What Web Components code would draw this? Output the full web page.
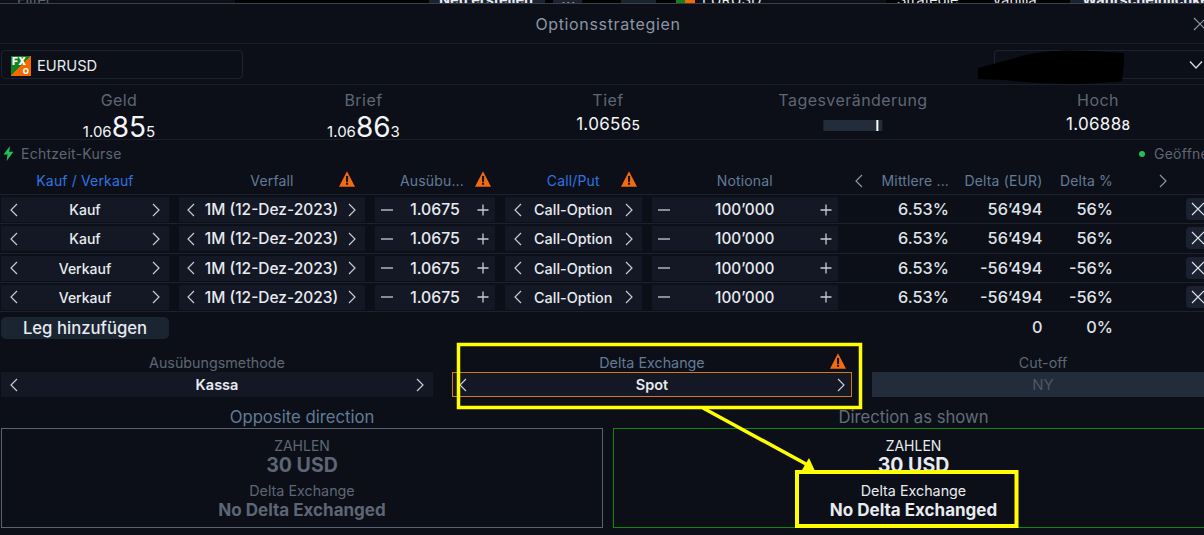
<!DOCTYPE html>
<html lang="de"><head><meta charset="utf-8"><title>Optionsstrategien</title>
<style>
html,body{margin:0;padding:0;background:#0c0f17;}
body{width:1204px;height:535px;overflow:hidden;font-family:Inter,"Liberation Sans",sans-serif;color:#e8ebf0;}
</style></head>
<body>
<fx-app></fx-app>
<script>
const ICON={
 left:'<svg width="10" height="16" viewBox="0 0 10 16"><path d="M8 2 2 8l6 6" fill="none" stroke="currentColor" stroke-width="1.2"/></svg>',
 right:'<svg width="10" height="16" viewBox="0 0 10 16"><path d="M2 2l6 6-6 6" fill="none" stroke="currentColor" stroke-width="1.2"/></svg>',
 minus:'<svg width="14" height="14" viewBox="0 0 14 14"><path d="M1 7h12" stroke="currentColor" stroke-width="1.3"/></svg>',
 plus:'<svg width="14" height="14" viewBox="0 0 14 14"><path d="M1.5 7h11M7 1.5v11" stroke="currentColor" stroke-width="1.3"/></svg>',
 warn:'<svg width="16" height="16" viewBox="0 0 15 15"><path d="M7.5 0.3 15 14.8H0z" fill="#f26a12"/><rect x="6.6" y="4.6" width="1.9" height="5.6" fill="#10131a"/><rect x="6.6" y="11" width="1.9" height="1.9" fill="#10131a"/></svg>',
 x:'<svg width="14" height="14" viewBox="0 0 14 14"><path d="M1 1l12 12M13 1 1 13" stroke="currentColor" stroke-width="1.2" fill="none"/></svg>'
};
function def(name,css,html){
  customElements.define(name,class extends HTMLElement{
    connectedCallback(){
      if(this.shadowRoot)return;
      const r=this.attachShadow({mode:'open'});
      const a=n=>this.getAttribute(n)||'';
      r.innerHTML='<style>'+css+'</style>'+(typeof html==='function'?html(a,this):html);
    }
  });
}
def('fx-strip',`:host{display:flex;height:3px;overflow:hidden;background:#000;border-bottom:1px solid #3b4048;align-items:flex-end;font:700 14.5px/13px Inter,sans-serif;color:#e8ebf0}
 span{display:block;height:13px;margin-bottom:-3px;box-sizing:border-box;flex:none;white-space:nowrap}
 .b{background:#1b2230}.d{background:#0c0f17}.n{font-weight:400}`,
 `<span class="d n" style="width:235px;padding-left:17px;color:#5e6675">Filter</span>
  <span style="width:194px"></span>
  <span class="b" style="width:116px;padding-left:10px">Neu erstellen</span>
  <span style="width:8px"></span>
  <span class="b" style="width:29px;padding-left:8px">...</span>
  <span style="width:39px"></span>
  <span class="b" style="width:35px"></span>
  <span style="width:20px"></span>
  <span class="d n" style="width:210px;padding-left:26px;background:linear-gradient(90deg,#118121 0 9px,#f56a00 9px 19px,#0c0f17 19px)">EURUSD</span>
  <span class="n" style="width:94px;padding-left:11px">Strategie</span>
  <span class="n" style="width:90px;padding-left:12px">Vanilla</span>
  <span class="b" style="flex:1;padding-left:12px">Wahrscheinlichkeit</span>`);
def('fx-title',`:host{display:flex;height:40px;box-sizing:border-box;padding-left:12px;align-items:center;justify-content:center;border-bottom:1px solid #1a202b;position:relative;font:400 16px Inter,sans-serif;color:#8b95a5;letter-spacing:.65px}
 svg{position:absolute;right:-3px;top:13px;color:#8b95a5}`,
 ()=>`<slot></slot>${ICON.x}`);
def('fx-select-bar',`:host{display:flex;justify-content:space-between;height:41px;box-sizing:border-box;padding:6px 0 0 1px;border-bottom:1px solid #1a202b}
 .box{border:1px solid #1c2330;border-radius:4px;height:29px;box-sizing:border-box;display:flex;align-items:center}
 .inst{width:242px;padding:2px 0 0 9px;gap:6px;font:400 14.7px Inter,sans-serif;color:#e8ebf0}
 .acc{width:210px;border-right:0;border-radius:4px 0 0 4px;justify-content:flex-end;color:#d5d9df}
 .logo{position:relative;width:20px;height:20px;background:linear-gradient(135deg,#118121 0 50%,#f56a00 50%);font:800 10px/11px Inter,sans-serif;color:#fff;flex:none;overflow:hidden}
 .logo b{position:absolute;left:1px;top:0;letter-spacing:.3px}.logo i{position:absolute;right:2px;bottom:0;font:800 8px/9px Inter,sans-serif}`,
 `<div class="box inst"><div class="logo"><b>FX</b><i>O</i></div><span>EURUSD</span></div>
  <div class="box acc"><svg width="16" height="10" viewBox="0 0 16 10"><path d="M2 1.5 8 8l6-6.5" fill="none" stroke="currentColor" stroke-width="1.4"/></svg></div>`);
def('fx-quote',`:host{display:flex;flex-direction:column;align-items:center;position:absolute;top:5px;transform:translateX(-50%);white-space:nowrap}
 .l{font:400 16px/20px Inter,sans-serif;color:#5e6675;letter-spacing:.45px}
 .p{font:400 15px/26px Inter,sans-serif;color:#f3f5f8;height:26px;display:flex;align-items:baseline;margin-top:4px}
 .s{font-size:15px}.big{font-size:28px;line-height:26px}
 :host([plain]) .p{margin-top:1px}
 :host([plain]) .a{font-size:17px;letter-spacing:.3px}
 :host([plain]) .c{font-size:13.5px;font-weight:500}`,
 a=>`<div class="l">${a('label')}</div><div class="p"><span class="s a">${a('a')}</span><span class="big">${a('b')}</span><span class="s c">${a('c')}</span><slot></slot></div>`);
def('fx-quotes',`:host{display:block;position:relative;height:55px;box-sizing:border-box;border-bottom:1px solid #1a202b}`,'<slot></slot>');
def('fx-bar',`:host{display:flex;width:59px;height:11px;background:#232c3b;margin-top:6px;justify-content:flex-end;padding-right:4px;box-sizing:border-box;align-self:flex-start}
 i{display:block;width:2px;background:#fff}`,'<i></i>');
def('fx-status',`:host{display:flex;justify-content:space-between;height:27px;align-items:center;font:400 14px Inter,sans-serif;color:#5e6675;white-space:nowrap;letter-spacing:.25px;padding-left:3px}
 div{display:flex;align-items:center;gap:7px}.r{width:65px;overflow:hidden;gap:9px}i{width:6px;height:6px;border-radius:50%;background:#1fc15a;flex:none}`,
 `<div><svg width="11" height="15" viewBox="0 0 11 15"><path d="M7 0 .5 8.5h4L3.5 15 10.5 5.8h-4.3z" fill="#1fc15a"/></svg><span>Echtzeit-Kurse</span></div><div class="r"><i></i><span>Geöffnet</span></div>`);
const GRID='grid-template-columns:178px 196px 130px 146.5px 186.5px 111px 93.5px 70.5px 91px;column-gap:0';
def('fx-head',`:host{display:grid;${GRID};height:28px;box-sizing:border-box;padding-left:1px;align-items:center;border-bottom:1px solid #1c2330;font:400 14px Inter,sans-serif;color:#627b97;white-space:nowrap;letter-spacing:.15px}
 .c{display:flex;justify-content:center;align-items:center;position:relative;height:27px;padding-right:10px}
 .blue{color:#2e74e2}.w{position:absolute;top:4px;line-height:0}.r{justify-content:flex-end;padding-right:0}
 .ch{position:absolute;color:#8b95a5;top:6px;line-height:0}`,
 ()=>`<div class="c blue">Kauf / Verkauf</div>
 <div class="c">Verfall<span class="w" style="left:160px">${ICON.warn}</span></div>
 <div class="c" style="padding-right:16px">Ausübu...<span class="w" style="left:100px">${ICON.warn}</span></div>
 <div class="c blue">Call/Put<span class="w" style="left:116px">${ICON.warn}</span></div>
 <div class="c" style="padding-right:0">Notional</div>
 <div class="c r"><span class="ch" style="left:16px">${ICON.left}</span>Mittlere ...</div>
 <div class="c r">Delta (EUR)</div>
 <div class="c r">Delta %<span class="ch" style="left:115px">${ICON.right}</span></div><div></div>`);
def('fx-stepper',`:host{display:flex;align-items:center;justify-content:space-between;height:25px;box-sizing:border-box;background:#131824;color:#e8ebf0;font:var(--fw,500) var(--fs,14px) Inter,sans-serif;padding:0 8px;white-space:nowrap}
 :host([active]){outline:1px solid #d6791a;outline-offset:-1px;padding:0 6px}
 :host([disabled]){background:#232c3b;color:#4d5665;justify-content:center;--fs:15px;--fw:400}
 span{display:flex;color:#c7ccd4}.t{color:inherit;display:block}
 :host([type=num]){padding:0 5px}`,
 a=>{
   const num=a('type')==='num';
   if(a('mode')==='static')return `<span class="t"><slot></slot></span>`;
   return `<span>${num?ICON.minus:ICON.left}</span><span class="t"><slot></slot></span><span>${num?ICON.plus:ICON.right}</span>`;
 });
def('fx-leg',`:host{display:grid;${GRID};height:29.33px;box-sizing:border-box;padding:2px 0 0 1px;border-bottom:1px solid #1c2330;align-items:start;font:500 16.3px/25px Inter,sans-serif;color:#dfe2e7;white-space:nowrap}
 .s{margin-right:10px}
 .v{text-align:right;height:25px}
 .x{display:flex;align-items:center;margin-left:73px;width:40px;height:22px;background:#1a2130;border-radius:4px;padding-left:5px;margin-top:1px;color:#dfe3e8;box-sizing:border-box}`,
 a=>`<fx-stepper class="s">${a('side')}</fx-stepper>
 <fx-stepper class="s" style="--fs:15.5px;padding:0 8px 0 7px">1M (12-Dez-2023)</fx-stepper>
 <fx-stepper class="s" type="num" style="--fs:15.8px">1.0675</fx-stepper>
 <fx-stepper class="s" style="--fs:14.4px">Call-Option</fx-stepper>
 <fx-stepper type="num" style="--fs:15.3px">100’000</fx-stepper>
 <div class="v">6.53%</div><div class="v">${a('delta')}</div><div class="v">${a('pct')}</div>
 <div class="x">${ICON.x}</div>`);
def('fx-total',`:host{display:grid;${GRID};height:36px;padding-left:1px;font:500 16.3px/24px Inter,sans-serif;color:#dfe2e7;white-space:nowrap;box-sizing:border-box;padding-top:3px}
 button{all:unset;grid-column:1;width:168px;height:22px;margin-top:2px;background:#1b2431;border-radius:5px;font:500 16.7px/21px Inter,sans-serif;color:#e8ebf0;text-align:center}
 div{text-align:right}`,
 `<button>Leg hinzufügen</button><div style="grid-column:7">0</div><div style="grid-column:8">0%</div>`);
def('fx-settings',`:host{display:grid;grid-template-columns:451px 420px 342px;padding-left:1px;margin-top:5px;font:400 14.3px/19px Inter,sans-serif;color:#5e6675;white-space:nowrap;text-align:center;--fw:600;--fs:14.5px}
 .c{position:relative}.l{height:19px}.w{position:absolute;right:26px;top:0;line-height:0}
 .g{padding-right:19px}.g2{padding-right:20px}
 .blue{color:#627b97}`,
 ()=>`<div class="c g"><div class="l">Ausübungsmethode</div><fx-stepper>Kassa</fx-stepper></div>
 <div class="c g2"><div class="l blue">Delta Exchange<span class="w">${ICON.warn}</span></div><fx-stepper active>Spot</fx-stepper></div>
 <div class="c"><div class="l">Cut-off</div><fx-stepper mode="static" disabled>NY</fx-stepper></div>`);
def('fx-outcome',`:host{display:flex;flex-direction:column;min-width:0;text-align:center;white-space:nowrap}
 .h{font:400 16.7px/20px Inter,sans-serif;color:#627b97;margin-bottom:1px}
 .b{height:100px;box-sizing:border-box;border:1px solid #5a6370;display:flex;flex-direction:column;align-items:center;padding-top:7.5px;color:#5e6675}
 :host([on]) .b{border-color:#0c8a0c;color:#e8ebf0}
 :host([on]) .h{color:#626c7a}
 .z{font:400 14px/17px Inter,sans-serif}.v{font:700 19.5px/22px Inter,sans-serif;margin-bottom:6px}
 .d{font:400 14.3px/18px Inter,sans-serif}.n{font:700 17px/21px Inter,sans-serif}`,
 a=>`<div class="h">${a('title')}</div><div class="b"><div class="z">ZAHLEN</div><div class="v">30 USD</div><div class="d">Delta Exchange</div><div class="n">No Delta Exchanged</div></div>`);
def('fx-outcomes',`:host{display:grid;grid-template-columns:602px 601px;column-gap:10px;padding-left:1px;margin-top:10px;width:1214px;box-sizing:border-box}`,'<slot></slot>');
def('fx-marks',`:host{position:absolute;left:0;top:0;width:1204px;height:535px;pointer-events:none;display:block}
 svg{position:absolute;left:0;top:0}`,
 `<svg width="1204" height="535" viewBox="0 0 1204 535"><path d="M978 68 1012 59C1030 52 1060 49 1090 51L1124 53 1124 64 1122 81C1090 85 1040 85 1005 80L978 79Z" fill="#000"/><g fill="none" stroke="#ffff00"><rect x="458.5" y="344.5" width="402" height="63" stroke-width="3.5"/><rect x="797" y="472" width="219.5" height="54" stroke-width="4"/><path d="M703 408 806 464" stroke-width="3.5"/></g><path d="M815 471 802 470 809 458z" fill="#ffff00"/></svg>`);
def('fx-app',`:host{display:block;position:relative;width:1204px;height:535px;overflow:hidden;background:#0c0f17}`,
 `<fx-strip></fx-strip>
 <fx-title>Optionsstrategien</fx-title>
 <fx-select-bar></fx-select-bar>
 <fx-quotes>
  <fx-quote label="Geld" a="1.06" b="85" c="5" style="left:119px"></fx-quote>
  <fx-quote label="Brief" a="1.06" b="86" c="3" style="left:363.5px"></fx-quote>
  <fx-quote plain label="Tief" a="1.0656" c="5" style="left:608px"></fx-quote>
  <fx-quote label="Tagesveränderung" style="left:853px"><fx-bar></fx-bar></fx-quote>
  <fx-quote plain label="Hoch" a="1.0688" c="8" style="left:1098px"></fx-quote>
 </fx-quotes>
 <fx-status></fx-status>
 <fx-head></fx-head>
 <fx-leg side="Kauf" delta="56’494" pct="56%"></fx-leg>
 <fx-leg side="Kauf" delta="56’494" pct="56%"></fx-leg>
 <fx-leg side="Verkauf" delta="-56’494" pct="-56%"></fx-leg>
 <fx-leg side="Verkauf" delta="-56’494" pct="-56%"></fx-leg>
 <fx-total></fx-total>
 <fx-settings></fx-settings>
 <fx-outcomes><fx-outcome title="Opposite direction"></fx-outcome><fx-outcome on title="Direction as shown"></fx-outcome></fx-outcomes>
 <fx-marks></fx-marks>`);
</script>
</body></html>
